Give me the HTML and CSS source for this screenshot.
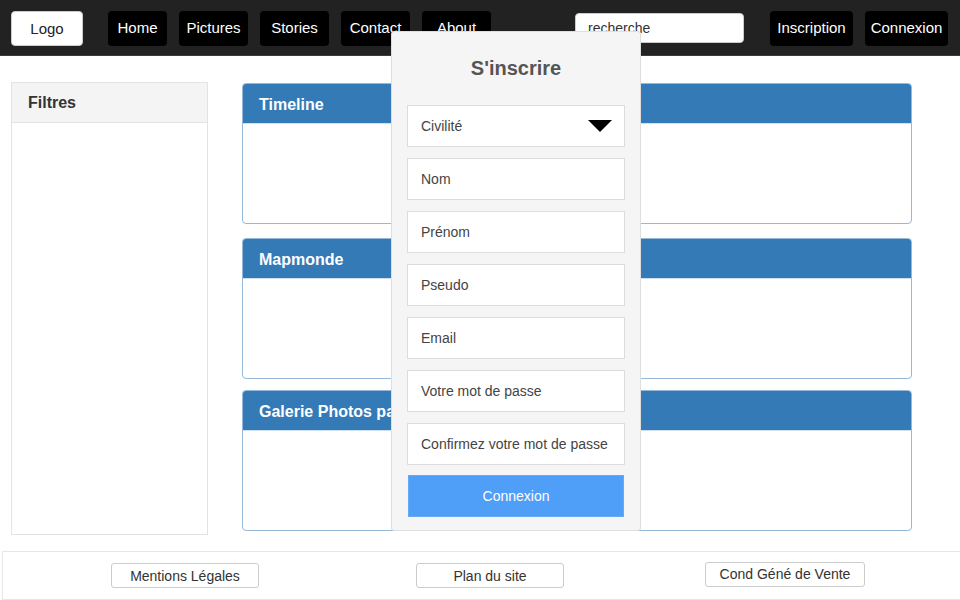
FILE: index.html
```html
<!DOCTYPE html>
<html lang="fr">
<head>
    <meta charset="UTF-8">
    <title>Accueil</title>
    <link rel="stylesheet" href="styles.css">
</head>
<body>
    <div class="header">
        <button class="logo">Logo</button>
        <div class="nav">
            <button class="nav-btn btn-home">Home</button>
            <button class="nav-btn">Pictures</button>
            <button class="nav-btn">Stories</button>
            <button class="nav-btn">Contact</button>
            <button class="nav-btn">About</button>
        </div>
        <input class="search" type="text" value="recherche">
        <div class="account">
            <button class="nav-btn btn-account">Inscription</button>
            <button class="nav-btn btn-account">Connexion</button>
        </div>
    </div>

    <div class="main">
        <div class="filters">
            <div class="filters-title">Filtres</div>
        </div>
        <div class="content">
            <div class="panel">
                <div class="panel-title">Timeline</div>
                <div class="panel-body"></div>
            </div>
            <div class="panel">
                <div class="panel-title">Mapmonde</div>
                <div class="panel-body"></div>
            </div>
            <div class="panel">
                <div class="panel-title">Galerie Photos par pays</div>
                <div class="panel-body"></div>
            </div>
        </div>
    </div>

    <div class="footer">
        <button class="footer-btn">Mentions Légales</button>
        <button class="footer-btn btn-plan">Plan du site</button>
        <button class="footer-btn btn-cgv">Cond Géné de Vente</button>
    </div>

    <!-- fenêtre d'inscription -->
    <div class="modal">
        <h2>S'inscrire</h2>
        <div class="field select">
            <span>Civilité</span>
            <span class="arrow"></span>
        </div>
        <div class="field">Nom</div>
        <div class="field">Prénom</div>
        <div class="field">Pseudo</div>
        <div class="field">Email</div>
        <div class="field">Votre mot de passe</div>
        <div class="field">Confirmez votre mot de passe</div>
        <button class="submit">Connexion</button>
    </div>
</body>
</html>
```

FILE: styles.css
```css
body {
    margin: 0;
    padding: 0;
    font-family: "Liberation Sans", Arial, sans-serif;
    background-color: white;
    position: relative;
    height: 600px;
    overflow: hidden;
}

button {
    font-family: "Liberation Sans", Arial, sans-serif;
    cursor: pointer;
}

/* Barre du haut */
.header {
    height: 56px;
    background-color: #222222;
    border-bottom: 1px solid #3a3a3a;
    box-sizing: border-box;
    display: flex;
    align-items: center;
    padding: 0 12px 0 11px;
}

.logo {
    width: 72px;
    height: 35px;
    background-color: white;
    border: 1px solid #ccc;
    border-radius: 4px;
    font-size: 15px;
    color: #222;
    margin-right: 25px;
    margin-top: 1px;
}

.nav {
    display: flex;
    gap: 12px;
    margin-top: 1px;
}

.nav-btn {
    width: 69px;
    height: 35px;
    background-color: black;
    color: white;
    border: none;
    border-radius: 4px;
    font-size: 15px;
    padding: 0;
    padding-bottom: 2px;
}

.btn-home {
    width: 59px;
}

.search {
    margin-left: 84px;
    width: 169px;
    height: 30px;
    box-sizing: border-box;
    border: 1px solid #ccc;
    border-radius: 4px;
    padding: 0 12px;
    font-family: "Liberation Sans", Arial, sans-serif;
    font-size: 14px;
    color: #333;
    margin-top: 1px;
}

.account {
    display: flex;
    gap: 12px;
    margin-left: auto;
    margin-top: 1px;
}

.btn-account {
    width: 83px;
}

/* Contenu */
.main {
    display: flex;
    padding: 26px 48px 0 11px;
    gap: 34px;
    height: 480px;
    box-sizing: border-box;
}

.filters {
    width: 197px;
    height: 453px;
    box-sizing: border-box;
    border: 1px solid #e3e3e3;
}

.filters-title {
    height: 40px;
    box-sizing: border-box;
    background-color: #f4f4f4;
    border-bottom: 1px solid #e3e3e3;
    padding: 11px 16px;
    font-size: 16px;
    font-weight: bold;
    color: #333;
}

.content {
    flex: 1;
    display: flex;
    flex-direction: column;
    gap: 14px;
    padding-top: 1px;
}

.panel {
    height: 141px;
    box-sizing: border-box;
    border: 1px solid #94b9da;
    border-radius: 4px;
    overflow: hidden;
}

.panel + .panel + .panel {
    margin-top: -3px;
}

.panel-title {
    height: 40px;
    box-sizing: border-box;
    background-color: #337ab7;
    color: white;
    font-size: 16px;
    font-weight: bold;
    padding: 12px 16px;
    border-bottom: 1px solid #cfe0ef;
}

/* Pied de page */
.footer {
    margin: 15px 0 0 2px;
    height: 49px;
    box-sizing: border-box;
    border: 1px solid #e6e6e6;
    border-right: none;
    display: flex;
    align-items: center;
    padding-left: 108px;
}

.footer-btn {
    width: 148px;
    height: 25px;
    background-color: white;
    border: 1px solid #ccc;
    border-radius: 3px;
    font-size: 14px;
    color: #333;
    padding: 0;
}

.btn-plan {
    margin-left: 157px;
}

.btn-cgv {
    width: 160px;
    margin-left: 141px;
    margin-top: -3px;
}

/* Fenêtre d'inscription */
.modal {
    position: absolute;
    left: 391px;
    top: 31px;
    width: 250px;
    height: 500px;
    box-sizing: border-box;
    background-color: #f5f5f5;
    border: 1px solid #dedede;
    border-radius: 3px;
    padding: 0 15px;
    display: flex;
    flex-direction: column;
    gap: 11px;
}

.modal h2 {
    margin: 25px 0 14px 0;
    text-align: center;
    font-size: 20px;
    color: #555;
}

.field {
    height: 42px;
    box-sizing: border-box;
    background-color: white;
    border: 1px solid #dcdcdc;
    padding: 0 13px;
    display: flex;
    align-items: center;
    font-size: 14px;
    color: #444;
}

.select {
    justify-content: space-between;
}

.arrow {
    width: 0;
    height: 0;
    border-left: 12px solid transparent;
    border-right: 12px solid transparent;
    border-top: 12px solid black;
    margin-right: -1px;
}

.submit {
    height: 42px;
    background-color: #4f9ef8;
    border: 1px solid #68aaf5;
    color: white;
    font-size: 14px;
    margin: -1px 1px 0 1px;
}
```
